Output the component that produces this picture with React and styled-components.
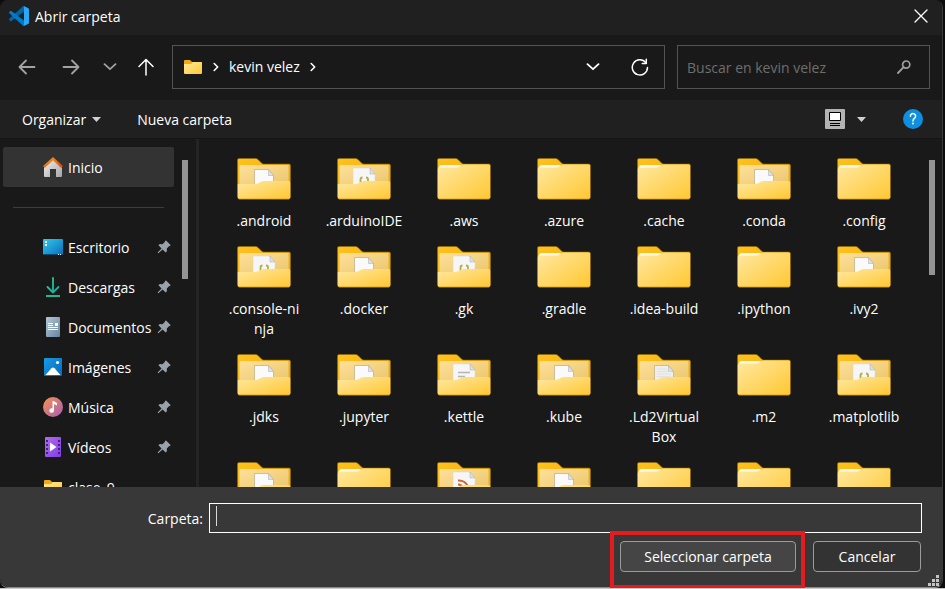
import React from "react";
import styled, { createGlobalStyle } from "styled-components";

const GlobalStyle = createGlobalStyle`
  * { box-sizing: border-box; }
  body { margin: 0; background: #0c0c0c; }
  button, input { font: inherit; color: inherit; }
  svg { display: block; flex: none; }
`;

const Page = styled.div`
  height: 100vh;
  min-height: 400px;
  padding-right: 2px;
  border-bottom: 1px solid #c8c8c8;
  overflow: hidden;
  font: 14px/20px "Open Sans", "Noto Sans", sans-serif;
  color: #fff;
`;

const Dialog = styled.div`
  height: 100%;
  display: flex;
  flex-direction: column;
  background: #191919;
  border-right: 1px solid #3a3a3a;
  border-bottom: 1px solid #8a8a8a;
  border-radius: 8px;
`;

const TitleBar = styled.header`
  display: flex;
  align-items: center;
  gap: 6px;
  height: 35px;
  padding: 0 5px 3px 9px;
  background: #202020;
  border-radius: 8px 8px 0 0;
`;

const Title = styled.h1`
  flex: 1;
  margin: 0;
  padding-top: 2px;
  font-size: 14px;
  font-weight: 400;
`;

const PlainButton = styled.button`
  display: flex;
  align-items: center;
  justify-content: center;
  flex: none;
  width: ${(p) => p.$width || 32}px;
  height: 32px;
  padding: 0;
  border: 0;
  background: none;
  color: ${(p) => (p.$dim ? "#a2a2a2" : "#fff")};
`;

const NavBar = styled.nav`
  display: flex;
  align-items: center;
  height: 65px;
  padding: 0 12px 2px 11px;
`;

const NavButtons = styled.div`
  display: flex;
  width: 161px;
  flex: none;
`;

const Fields = styled.div`
  flex: 1;
  display: grid;
  grid-template-columns: minmax(0, 493fr) minmax(0, 253fr);
  gap: 12px;
`;

const Field = styled.div`
  display: flex;
  align-items: center;
  gap: ${(p) => p.$gap || 0}px;
  height: 44px;
  padding: 0 ${(p) => (p.$flush ? 0 : 9)}px 0 ${(p) => (p.$flush ? 10 : 9)}px;
  border: 1px solid #535353;
`;

const Crumb = styled.span`
  flex: 1;
  display: flex;
  align-items: center;
  gap: 10px;
`;

const SearchInput = styled.input`
  flex: 1;
  min-width: 0;
  padding: 2px 0 0;
  border: 0;
  outline: 0;
  background: none;
  &::placeholder { color: #6e6e6e; opacity: 1; }
`;

const Toolbar = styled.div`
  display: flex;
  align-items: center;
  height: 39px;
  padding: 0 19px 0 22px;
  background: #202020;
  border-bottom: 1px solid #151515;
`;

const ToolButton = styled.button`
  display: flex;
  align-items: center;
  gap: 6px;
  margin-right: ${(p) => p.$after || 0}px;
  padding: 0;
  border: 0;
  background: none;
`;

const Label = styled.span`
  padding-top: 2px;
`;

const Spacer = styled.div`
  flex: 1;
`;

const Body = styled.div`
  flex: 1;
  min-height: 0;
  display: grid;
  grid-template-columns: 199px minmax(0, 1fr);
`;

const Sidebar = styled.aside`
  display: flex;
  justify-content: space-between;
  min-height: 0;
  overflow: hidden;
  padding: 8px 8px 0 3px;
  border-right: 3px solid #242424;
`;

const Places = styled.ul`
  list-style: none;
  width: 171px;
  margin: 0;
  padding: 0;
`;

const PlaceItem = styled.li`
  display: flex;
  align-items: center;
  height: 40px;
  padding: 0 3px 0 40px;
  border-radius: 2px;
  background: ${(p) => (p.$active ? "#333" : "none")};
`;

const PlaceLink = styled.a`
  flex: 1;
  display: flex;
  align-items: center;
  gap: 5px;
  color: #fff;
  text-decoration: none;
  white-space: nowrap;
`;

const Divider = styled.li`
  height: 40px;
  padding: 20px 10px 0;
  &::before { content: ""; display: block; height: 1px; background: #3c3c3c; }
`;

const Thumb = styled.div`
  flex: none;
  width: 6px;
  height: ${(p) => p.$size}px;
  margin-top: 13px;
  background: #949494;
`;

const Files = styled.main`
  display: flex;
  min-height: 0;
  overflow: hidden;
  padding: 8px 7px 0 15px;
`;

const FileGrid = styled.ul`
  flex: 1;
  display: grid;
  grid-template-columns: repeat(auto-fill, 100px);
  align-content: start;
  row-gap: 15px;
  list-style: none;
  margin: 0;
  padding: 11px 0 0;
`;

const FileItem = styled.li`
  display: flex;
  flex-direction: column;
  align-items: center;
  gap: 11px;
`;

const FileName = styled.span`
  text-align: center;
  white-space: pre;
`;

const Footer = styled.footer`
  position: relative;
  padding: 16px 20px 15px 0;
  background: #383838;
  border-radius: 0 0 8px 8px;
`;

const NameRow = styled.div`
  display: flex;
  align-items: center;
  margin-bottom: 8px;
`;

const NameLabel = styled.label`
  width: 209px;
  padding: 2px 6px 0 0;
  text-align: right;
`;

const NameField = styled.div`
  flex: 1;
  display: flex;
  height: 30px;
  padding: 2px 6px;
  border: 1px solid #fff;
`;

const Caret = styled.span`
  width: 1px;
  height: 20px;
  background: #d8d8d8;
`;

const NameInput = styled.input`
  flex: 1;
  padding: 0;
  border: 0;
  outline: 0;
  background: none;
`;

const Actions = styled.div`
  display: flex;
  justify-content: flex-end;
  gap: 17px;
  padding-right: 1px;
`;

const Highlight = styled.div`
  position: relative;
  &::after {
    content: "";
    position: absolute;
    inset: -10px -9px -17px -10px;
    border: 4px solid #e51c1f;
    pointer-events: none;
  }
`;

const ActionButton = styled.button`
  width: ${(p) => p.$width}px;
  height: 31px;
  padding: 0;
  border: 1px solid #9b9b9b;
  border-radius: 4px;
  background: ${(p) => (p.$primary ? "#454545" : "#333")};
`;

const Grip = styled.svg`
  position: absolute;
  right: 3px;
  bottom: 1px;
`;

const stroke = { fill: "none", stroke: "currentColor", strokeLinecap: "round", strokeLinejoin: "round" };

const CodeLogo = () => (
  <svg width="20" height="20" viewBox="0 0 100 100">
    <path fill="#0065A9" d="M96.46 10.8 75.86.88a6.23 6.23 0 0 0-7.11 1.2L1.3 63.58a4.17 4.17 0 0 0 0 6.17l5.51 5a4.17 4.17 0 0 0 5.32.24l81.23-61.62c2.73-2.07 6.64-.12 6.64 3.3v-.24a6.25 6.25 0 0 0-3.54-5.63Z" />
    <path fill="#007ACC" d="m96.46 89.2-20.6 9.92a6.23 6.23 0 0 1-7.11-1.2L1.3 36.42a4.17 4.17 0 0 1 0-6.17l5.51-5a4.17 4.17 0 0 1 5.32-.24l81.23 61.62c2.73 2.07 6.64.12 6.64-3.3v.24a6.25 6.25 0 0 1-3.54 5.63Z" />
    <path fill="#28A8F5" d="M75.86 99.13a6.23 6.23 0 0 1-7.11-1.21C71.06 100.22 75 98.6 75 95.33V4.67c0-3.26-3.94-4.9-6.25-2.59A6.23 6.23 0 0 1 75.86.87l20.6 9.91A6.25 6.25 0 0 1 100 16.4v67.18a6.25 6.25 0 0 1-3.54 5.63Z" />
  </svg>
);

const CloseIcon = () => (
  <svg width="14" height="14" viewBox="0 0 14 14"><path {...stroke} strokeWidth="1.3" d="m1 1 12 12M13 1 1 13" /></svg>
);

const BackIcon = () => (
  <svg width="18" height="18" viewBox="0 0 18 18"><path {...stroke} strokeWidth="1.8" d="M16.500 9H2M8 2.500 1.500 9 8 15.500" /></svg>
);

const ForwardIcon = () => (
  <svg width="18" height="18" viewBox="0 0 18 18"><path {...stroke} strokeWidth="1.8" d="M1.500 9H16M10 2.500 16.500 9 10 15.500" /></svg>
);

const UpIcon = () => (
  <svg width="18" height="18" viewBox="0 0 18 18"><path {...stroke} strokeWidth="1.5" d="M9 17V2M2 8.5 9 1.5l7 7" /></svg>
);

const DownChevron = () => (
  <svg width="14" height="8" viewBox="0 0 14 8"><path {...stroke} strokeWidth="1.8" d="m1.5 1.2 5.5 5 5.5-5" /></svg>
);

const RightChevron = () => (
  <svg width="6" height="10" viewBox="0 0 6 10"><path {...stroke} strokeWidth="1.6" d="m1.2 1.5 3.5 3.5-3.5 3.5" /></svg>
);

const RefreshIcon = () => (
  <svg width="18" height="18" viewBox="0 0 18 18">
    <path {...stroke} strokeWidth="1.5" d="M16.5 9.5A7.6 7.6 0 1 1 14.8 4.6" />
    <path {...stroke} strokeWidth="1.5" d="M15.3 1.2v4.2h-4" />
  </svg>
);

const SearchIcon = () => (
  <svg width="14" height="14" viewBox="0 0 14 14">
    <circle cx="9.2" cy="4.6" r="3.6" fill="none" stroke="#a0a0a0" strokeWidth="1.7" />
    <path d="M6.6 7.2 1 13" stroke="#a0a0a0" strokeWidth="1.8" strokeLinecap="round" />
  </svg>
);

const Triangle = () => (
  <svg width="9" height="5" viewBox="0 0 9 5"><path fill="#d0d0d0" d="M0 0h9L4.5 5Z" /></svg>
);

const ViewIcon = () => (
  <svg width="20" height="20" viewBox="0 0 20 20">
    <rect width="20" height="20" rx="1" fill="#b3b3b3" />
    <path fill="#fff" stroke="#000" d="M4.5 3.5h11v8h-11z" />
    <path stroke="#000" d="M5 14.5h10M5 16.5h10" />
  </svg>
);

const HelpIcon = () => (
  <svg width="20" height="20" viewBox="0 0 20 20">
    <circle cx="10" cy="10" r="10" fill="#0f8fe0" />
    <path {...stroke} stroke="#fff" strokeWidth="1.5" d="M7.4 7.2a2.6 2.6 0 1 1 4.2 2C10.600 10 10 10.500 10 11.900" />
    <circle cx="10" cy="14.600" r="1" fill="#fff" />
  </svg>
);

const PinIcon = () => (
  <svg width="14" height="14" viewBox="0 0 14 14">
    <path fill="#98a2aa" d="M8.300.8q.5-.5 1 0l4 4q.5.500 0 1l-1.300.500-2.200 2.300.1 2.700-1.200 1.200L5.600 9.500 1.600 13 .7 13.200.9 12.300 4.500 8.400 1.500 5.300l1.200-1.200 2.800.1L7.800 2Z" />
  </svg>
);

const SmallFolder = () => (
  <svg width="20" height="20" viewBox="0 0 20 20">
    <path fill="#f0a911" d="M1 4q0-1 1-1h5l2 2h9q1 0 1 1v3H1Z" />
    <path fill="url(#folderFront)" d="M1 7h7l2-2h8q1 0 1 1v10q0 1-1 1H2q-1 0-1-1Z" />
  </svg>
);

const HomeIcon = () => (
  <svg width="20" height="20" viewBox="0 0 20 20">
    <path fill="url(#houseWall)" d="M1 9.500 10 1l9 8.500V19q0 1-1 1h-5v-8H7v8H2q-1 0-1-1Z" />
    <path fill="none" stroke="url(#houseRoof)" strokeWidth="2.400" strokeLinejoin="round" d="M.9 10 10 1.600l9.100 8.400" />
  </svg>
);

const DesktopIcon = () => (
  <svg width="20" height="20" viewBox="0 0 20 20">
    <rect y="2" width="20" height="16" rx="1" fill="url(#desktop)" />
    <path fill="#0b4a72" d="M0 17h20v0q0 1-1 1H1q-1 0-1-1Z" />
    <path fill="#fff" d="M2 4h2v2H2zM2 7h2v2H2zM15 17h1v1h-1zM17 17h1v1h-1z" />
  </svg>
);

const DownloadIcon = () => (
  <svg width="20" height="20" viewBox="0 0 20 20">
    <path {...stroke} stroke="url(#download)" strokeWidth="1.800" d="M10 1v14.500M4.500 10l5.500 5.500 5.500-5.500" />
    <path fill="#1fb891" d="M3 18h14v2H3z" />
  </svg>
);

const DocumentIcon = () => (
  <svg width="20" height="20" viewBox="0 0 20 20">
    <rect x="3" width="14" height="20" rx="1" fill="url(#document)" />
    <path stroke="#fff" d="M5 6.500h5M5 8.500h5M5 10.500h10M5 12.500h10" />
    <path fill="#fff" d="M12 6h3v3h-3z" />
  </svg>
);

const ImageIcon = () => (
  <svg width="20" height="20" viewBox="0 0 20 20">
    <rect x="1" y="1" width="18" height="18" rx="1" fill="url(#image)" />
    <path fill="#fff" d="m2.500 18 6-6.800q1.500-1.500 3 0l6 6.800Z" />
    <circle cx="14.500" cy="5.500" r="1.600" fill="#fff" />
  </svg>
);

const MusicIcon = () => (
  <svg width="20" height="20" viewBox="0 0 20 20">
    <circle cx="10" cy="10" r="10" fill="url(#music)" />
    <path fill="#fff" d="M9.500 4h1l3.500 2v2.400l-3-1.400v6.500a2.300 2.300 0 1 1-1.500-2.100Z" />
  </svg>
);

const VideoIcon = () => (
  <svg width="20" height="20" viewBox="0 0 20 20">
    <rect x="2" width="16" height="20" rx="1" fill="url(#video)" />
    <path stroke="#42217c" strokeWidth="2" strokeDasharray="2 2" d="M4 3v15M16 3v15" />
    <path fill="#fff" d="M7 5.500v9l6.500-4.500Z" />
  </svg>
);

const HiddenDefs = styled.svg`
  position: absolute;
`;

const Gradients = () => (
  <HiddenDefs width="0" height="0" aria-hidden="true">
    <defs>
      {[
        ["folderFront", "#ffe8a0", "#ffc833"],
        ["folderInner", "#ffe09a", "#e9c66d"],
        ["folderBack", "#ffc21d", "#eca508"],
        ["houseWall", "#f2f2f2", "#a6a6a6"],
        ["houseRoof", "#f99b1c", "#d9480b"],
        ["desktop", "#30cbea", "#0a6bbd"],
        ["download", "#33d08f", "#12a8a0"],
        ["document", "#b4c7d9", "#6684a0"],
        ["image", "#189be4", "#0868bd"],
        ["music", "#f8924f", "#a45fb5"],
        ["video", "#b56af3", "#7d3fe0"],
      ].map(([id, from, to]) => (
        <linearGradient key={id} id={id} x1="0" y1="0" x2="1" y2="1">
          <stop stopColor={from} />
          <stop offset="1" stopColor={to} />
        </linearGradient>
      ))}
    </defs>
  </HiddenDefs>
);

const Sheet = ({ kind }) => {
  const wide = kind !== "page" && kind !== "lined";
  return (
    <>
      {wide ? (
        <path fill="#f6f6f6" stroke="#ddd6c0" strokeWidth=".5" d="M16 10h17l5 6v12H16Z" />
      ) : (
        <path fill={kind === "lined" ? "#eeeeec" : "#fafafa"} stroke="#b9ac88" strokeWidth=".7" d="M17.500 11.500h14l5 6V28h-19Z" />
      )}
      <path fill="#e0e0e0" stroke="#aaa" strokeWidth=".5" d={wide ? "M33 10v6h5Z" : "M31.500 11.500v6h5Z"} />
      {kind === "code" && (
        <path fill="none" stroke="#adb044" strokeWidth="1.800" d="M25.500 19.500q-2 0-2 2v3M29 19.500q2 0 2 2v3" />
      )}
      {kind === "text" && <path stroke="#b5b5b5" strokeWidth="1.500" d="M21 18.500h12M21 22.500h7" />}
      {kind === "lined" && <path stroke="#dcdcdc" strokeWidth=".7" d="M20 15h10M20 17.500h14M20 20h14M20 22.500h14" />}
      {kind === "feed" && (
        <path fill="none" stroke="#cc6430" strokeWidth="2" d="M21 18.500q7-.5 10 6M21 22.500q4 0 6 4" />
      )}
    </>
  );
};

const Folder = ({ kind }) => (
  <svg width="54" height="42" viewBox="0 0 54 42">
    <path fill="url(#folderBack)" stroke="#8f6a14" strokeWidth=".6" d="M.5 2Q.5.500 2 .5h16.500q1.500 0 2.500 1L24.500 5q.9 1 2.300 1H52q1.500 0 1.500 1.500V39q0 2-2 2h-49q-2 0-2-2Z" />
    {kind ? (
      <>
        <path fill="url(#folderInner)" d="M2.500 8q0-1 1-1h47q1 0 1 1v20h-49Z" />
        <Sheet kind={kind} />
        <path fill="url(#folderFront)" d="M.8 26h17q2 0 4-1l2.500-1.400q1.200-.6 2.600-.6h24.600q1.700 0 1.700 1.500V39q0 2-2 2h-48.400q-2 0-2-2Z" />
        <path stroke="#e0a520" strokeWidth=".8" d="M2 40.900h50" />
      </>
    ) : (
      <>
        <path fill="url(#folderFront)" d="M.8 11q0-2 2-2h17q2 0 3.500-1.200 2-1.300 3.500-1.300h24.500q1.700 0 1.700 1.500V39q0 2-2 2H2.800q-2 0-2-2Z" />
        <path fill="#fff" opacity=".9" d="M2 9.500Q2 7 4 7h20q-2 2.500-4 2.500H5q-2 0-3 1Z" />
        <path stroke="#e0a520" strokeWidth=".8" d="M2 40.900h50" />
      </>
    )}
  </svg>
);

const places = [
  { name: "Escritorio", Icon: DesktopIcon, pinned: true },
  { name: "Descargas", Icon: DownloadIcon, pinned: true },
  { name: "Documentos", Icon: DocumentIcon, pinned: true },
  { name: "Imágenes", Icon: ImageIcon, pinned: true },
  { name: "Música", Icon: MusicIcon, pinned: true },
  { name: "Vídeos", Icon: VideoIcon, pinned: true },
  { name: "clase_9", Icon: SmallFolder, pinned: false },
];

const folders = [
  [".android", "page"], [".arduinoIDE", "code"], [".aws"], [".azure"], [".cache"], [".conda", "page"], [".config"],
  [".console-ni\nnja", "code"], [".docker", "page"], [".gk", "code"], [".gradle"], [".idea-build"], [".ipython"], [".ivy2", "page"],
  [".jdks", "page"], [".jupyter", "page"], [".kettle", "text"], [".kube", "page"], [".Ld2Virtual\nBox", "lined"], [".m2"], [".matplotlib", "code"],
  ["", "page"], [""], ["", "feed"], ["", "page"], [""], [""], [""],
];

export default function App() {
  return (
    <Page>
      <GlobalStyle />
      <Gradients />
      <Dialog role="dialog" aria-labelledby="dialog-title">
        <TitleBar>
          <CodeLogo />
          <Title id="dialog-title">Abrir carpeta</Title>
          <PlainButton aria-label="Cerrar"><CloseIcon /></PlainButton>
        </TitleBar>

        <NavBar>
          <NavButtons>
            <PlainButton $dim aria-label="Atrás"><BackIcon /></PlainButton>
            <PlainButton $dim $width={56} aria-label="Adelante"><ForwardIcon /></PlainButton>
            <PlainButton $dim $width={22} aria-label="Recientes"><DownChevron /></PlainButton>
            <PlainButton $width={50} aria-label="Subir"><UpIcon /></PlainButton>
          </NavButtons>
          <Fields>
            <Field $gap={10} $flush>
              <SmallFolder />
              <Crumb><RightChevron />kevin velez<RightChevron /></Crumb>
              <PlainButton $width={26} aria-label="Ubicaciones anteriores"><DownChevron /></PlainButton>
              <PlainButton $width={48} aria-label="Actualizar"><RefreshIcon /></PlainButton>
            </Field>
            <Field>
              <SearchInput aria-label="Buscar" placeholder="Buscar en kevin velez" />
              <PlainButton aria-label="Iniciar búsqueda"><SearchIcon /></PlainButton>
            </Field>
          </Fields>
        </NavBar>

        <Toolbar>
          <ToolButton $after={36}><Label>Organizar</Label><Triangle /></ToolButton>
          <ToolButton><Label>Nueva carpeta</Label></ToolButton>
          <Spacer />
          <ToolButton $after={12} aria-label="Cambiar vista"><ViewIcon /></ToolButton>
          <ToolButton $after={37} aria-label="Más opciones"><Triangle /></ToolButton>
          <ToolButton aria-label="Ayuda"><HelpIcon /></ToolButton>
        </Toolbar>

        <Body>
          <Sidebar>
            <Places>
              <PlaceItem $active><PlaceLink href="#inicio"><HomeIcon /><Label>Inicio</Label></PlaceLink></PlaceItem>
              <Divider role="separator" />
              {places.map(({ name, Icon, pinned }) => (
                <PlaceItem key={name}>
                  <PlaceLink href={`#${name}`}><Icon /><Label>{name}</Label></PlaceLink>
                  {pinned && <PinIcon />}
                </PlaceItem>
              ))}
            </Places>
            <Thumb $size={119} />
          </Sidebar>
          <Files>
            <FileGrid>
              {folders.map(([name, kind], i) => (
                <FileItem key={i}>
                  <Folder kind={kind} />
                  <FileName>{name}</FileName>
                </FileItem>
              ))}
            </FileGrid>
            <Thumb $size={115} />
          </Files>
        </Body>

        <Footer>
          <NameRow>
            <NameLabel htmlFor="folder-name">Carpeta:</NameLabel>
            <NameField>
              <Caret />
              <NameInput id="folder-name" type="text" />
            </NameField>
          </NameRow>
          <Actions>
            <Highlight><ActionButton $primary $width={176}>Seleccionar carpeta</ActionButton></Highlight>
            <ActionButton $width={108}>Cancelar</ActionButton>
          </Actions>
          <Grip width="11" height="11" viewBox="0 0 11 11">
            <path fill="#c4c4c4" d="M8 0h3v3H8zM4 4h3v3H4zM8 4h3v3H8zM0 8h3v3H0zM4 8h3v3H4zM8 8h3v3H8z" />
          </Grip>
        </Footer>
      </Dialog>
    </Page>
  );
}
